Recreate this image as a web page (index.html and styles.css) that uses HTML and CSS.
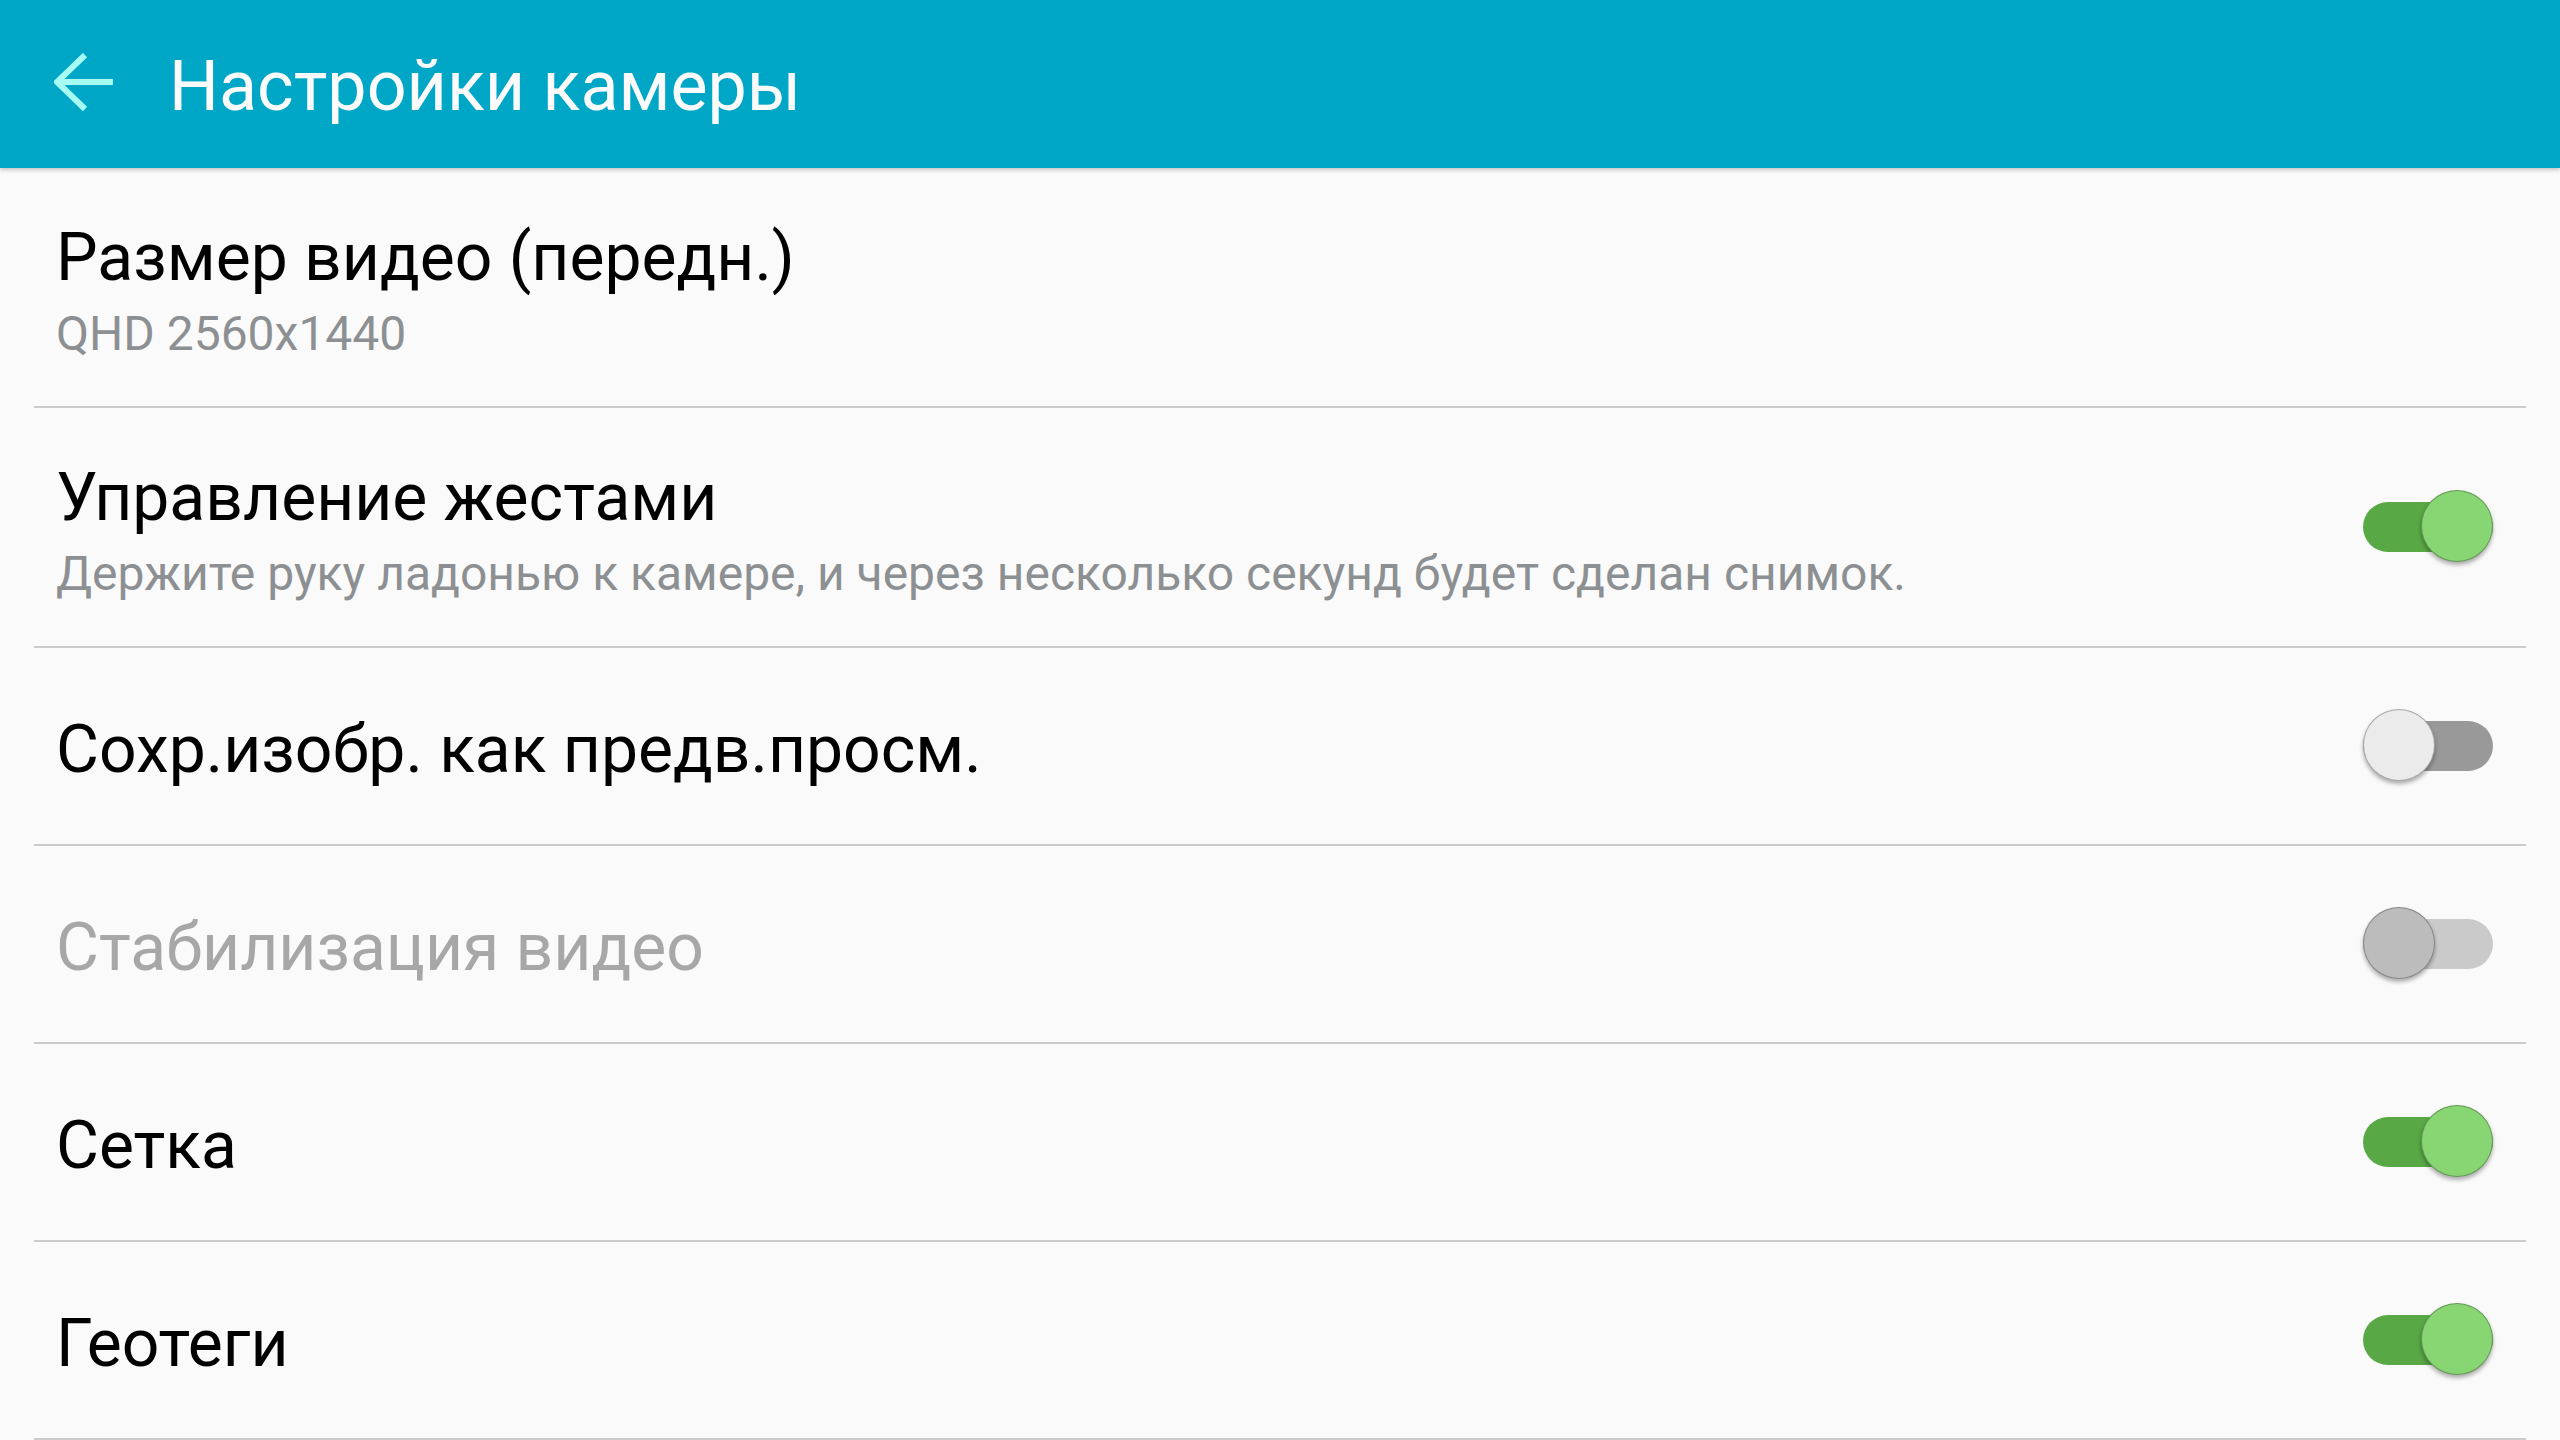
FILE: index.html
```html
<!DOCTYPE html>
<html lang="ru">
<head>
<meta charset="utf-8">
<title>Настройки камеры</title>
<link rel="stylesheet" href="styles.css">
</head>
<body>
<div class="screen">
  <header class="appbar">
    <svg class="back" width="60" height="60" viewBox="0 0 60 60" aria-hidden="true">
      <path d="M31 2 L3 29 L31 56 M3 29 L59 29" fill="none" stroke="#a6fcf2" stroke-width="6" stroke-linejoin="miter" stroke-linecap="butt"/>
    </svg>
    <h1 class="appbar-title">Настройки камеры</h1>
  </header>
  <main class="list">
    <div class="row row-tall">
      <div class="row-inner">
        <div class="text">
          <div class="title">Размер видео (передн.)</div>
          <div class="sub">QHD 2560x1440</div>
        </div>
      </div>
    </div>
    <div class="row row-tall">
      <div class="row-inner">
        <div class="text">
          <div class="title">Управление жестами</div>
          <div class="sub">Держите руку ладонью к камере, и через несколько секунд будет сделан снимок.</div>
        </div>
        <div class="switch on"><span class="track"></span><span class="knob"></span></div>
      </div>
    </div>
    <div class="row">
      <div class="row-inner">
        <div class="text"><div class="title">Сохр.изобр. как предв.просм.</div></div>
        <div class="switch off"><span class="track"></span><span class="knob"></span></div>
      </div>
    </div>
    <div class="row">
      <div class="row-inner">
        <div class="text"><div class="title disabled">Стабилизация видео</div></div>
        <div class="switch disabled-switch"><span class="track"></span><span class="knob"></span></div>
      </div>
    </div>
    <div class="row">
      <div class="row-inner">
        <div class="text"><div class="title">Сетка</div></div>
        <div class="switch on"><span class="track"></span><span class="knob"></span></div>
      </div>
    </div>
    <div class="row">
      <div class="row-inner">
        <div class="text"><div class="title">Геотеги</div></div>
        <div class="switch on"><span class="track"></span><span class="knob"></span></div>
      </div>
    </div>
  </main>
</div>
</body>
</html>
```

FILE: styles.css
```css
html, body {
  margin: 0;
  padding: 0;
  background: #fafafa;
}

body {
  font-family: Roboto, "Noto Sans", "Liberation Sans", sans-serif;
  width: 2560px;
  height: 1440px;
  overflow: hidden;
}

.screen {
  display: flex;
  flex-direction: column;
  height: 1440px;
}

.appbar {
  position: relative;
  z-index: 2;
  flex: 0 0 168px;
  display: flex;
  align-items: center;
  background: #00a6c6;
  box-shadow: 0 2px 4px rgba(0, 0, 0, 0.22);
  padding-left: 54px;
}

.back {
  display: block;
  flex: 0 0 auto;
  margin-top: -2px;
}

.appbar-title {
  margin: 0 0 0 55px;
  font-weight: 400;
  font-size: 70px;
  line-height: 80px;
  color: #fbfbfb;
  padding-top: 4px;
}

.list {
  flex: 1 1 auto;
  display: flex;
  flex-direction: column;
  background: #fafafa;
}

.row {
  flex: 0 0 198px;
  padding: 0 34px;
  display: flex;
}

.row-tall {
  flex-basis: 240px;
}

.row-inner {
  flex: 1 1 auto;
  display: flex;
  align-items: center;
  border-bottom: 2px solid #cccccc;
  padding: 0 33px 0 22px;
}

.text {
  flex: 1 1 auto;
  display: flex;
  flex-direction: column;
  padding-top: 8px;
}

.title {
  font-size: 66px;
  line-height: 76px;
  color: #000000;
}

.title.disabled {
  color: #a7a7a7;
}

.sub {
  font-size: 48px;
  line-height: 56px;
  color: #8d9092;
  margin-top: 10px;
}

.switch {
  position: relative;
  flex: 0 0 130px;
  height: 74px;
}

.track {
  position: absolute;
  left: 0;
  right: 0;
  top: 12px;
  height: 50px;
  border-radius: 25px;
}

.knob {
  position: absolute;
  top: 0;
  width: 72px;
  height: 72px;
  box-sizing: border-box;
  border-radius: 50%;
  border: 1px solid rgba(0, 0, 0, 0.28);
  box-shadow: 0 3px 4px rgba(0, 0, 0, 0.32);
}

.switch.on .track { background: #58a845; }
.switch.on .knob { right: 0; background: #88d673; }

.switch.off .track { background: #999999; }
.switch.off .knob { left: 0; background: #ebebeb; }

.switch.disabled-switch .track { background: #cacaca; }
.switch.disabled-switch .knob { left: 0; background: #bcbcbc; }
```
